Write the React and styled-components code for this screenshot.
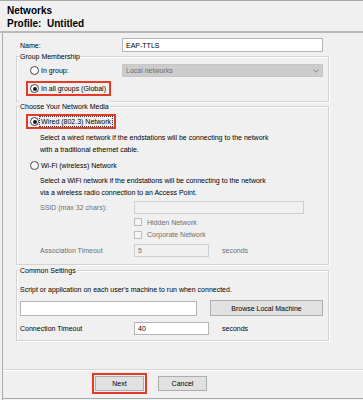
import React from "react";
import styled, { createGlobalStyle } from "styled-components";

const Global = createGlobalStyle`
  html, body { margin: 0; padding: 0; background: #f0f0f0; }
  body { font-family: "Liberation Sans", Arial, sans-serif; font-size: 7px; color: #000; }
  * { box-sizing: border-box; }
`;

const Window = styled.div`
  width: 363px;
  height: 400px;
  background: #f0f0f0;
  border-top: 1px solid #a8a8a8;
  display: flex;
  flex-direction: column;
  overflow: hidden;
`;

const Header = styled.div`
  height: 32px;
  padding: 3px 7px 0;
  border-bottom: 2px solid #b9b9b9;
  display: flex;
  flex-direction: column;
`;

const HeaderLine = styled.div`
  font-size: 10px;
  font-weight: bold;
  line-height: 13px;
  white-space: pre;
`;

const Body = styled.div`
  flex: 1;
  margin-left: 2px;
  border-left: 1px solid #a9a9a9;
  display: flex;
  flex-direction: column;
`;

const Content = styled.div`
  height: 337px;
  border-bottom: 1px solid #d6d6d6;
  box-shadow: 0 1px 0 #fff;
  padding: 5px 34px 0 13px;
  display: flex;
  flex-direction: column;
`;

const Row = styled.div`
  display: flex;
  align-items: center;
  padding-left: ${(p) => p.$indent || 0}px;
  margin-top: ${(p) => p.$mt || 0}px;
  height: ${(p) => (p.$h ? p.$h + "px" : "auto")};
`;

const Cell = styled.div`
  width: ${(p) => p.$w}px;
  flex: none;
  display: flex;
  align-items: center;
`;

const Label = styled.span`
  width: ${(p) => (p.$w ? p.$w + "px" : "auto")};
  flex: none;
  color: ${(p) => (p.$disabled ? "#6f6f6f" : "#000")};
  white-space: nowrap;
  line-height: 11px;
`;

const TextBox = styled.div`
  width: ${(p) => p.$w}px;
  height: ${(p) => p.$h || 13}px;
  flex: none;
  background: ${(p) => (p.$disabled ? "#f0f0f0" : "#fff")};
  border: 1px solid ${(p) => (p.$disabled ? "#cfcfcf" : "#b5b5b5")};
  padding: 0 3px;
  display: flex;
  align-items: center;
  color: ${(p) => (p.$disabled ? "#6f6f6f" : "#000")};
  line-height: 11px;
`;

const Select = styled.div`
  width: 201px;
  height: 13px;
  flex: none;
  background: #cccccc;
  border: 1px solid #c6c6c6;
  padding: 0 3px;
  display: flex;
  align-items: center;
  justify-content: space-between;
  color: #6d6d6d;
`;

const Group = styled.div`
  position: relative;
  margin-top: ${(p) => p.$mt}px;
  height: ${(p) => p.$h}px;
  border: 1px solid #d3d3d3;
  box-shadow: inset 1px 1px 0 #fff, 1px 1px 0 #fff;
  padding: ${(p) => p.$pt}px 4px 0 ${(p) => (p.$pl ?? 9)}px;
  display: flex;
  flex-direction: column;
`;

const Legend = styled.span`
  position: absolute;
  left: 2px;
  top: -6px;
  padding: 0 1px;
  background: #f0f0f0;
  line-height: 11px;
  color: #000;
`;

const RadioWrap = styled.div`
  display: inline-flex;
  align-items: center;
  gap: 1px;
  height: 15px;
  padding: 0 2px;
  border: 2px solid ${(p) => (p.$hl ? "#e23b27" : "transparent")};
  flex: none;
`;

const RadioCircle = styled.span`
  width: 9px;
  height: 9px;
  border-radius: 50%;
  border: 1px solid #444;
  background: #fff;
  display: flex;
  align-items: center;
  justify-content: center;
  flex: none;
  &::after {
    content: "";
    width: 4px;
    height: 4px;
    border-radius: 50%;
    background: ${(p) => (p.$on ? "#1a1a1a" : "transparent")};
  }
`;

const RadioText = styled.span`
  line-height: 9px;
  padding: 0 1px;
  outline: ${(p) => (p.$focus ? "1px dotted #333" : "none")};
  white-space: nowrap;
`;

const Desc = styled.div`
  padding-left: 14px;
  line-height: 12px;
  margin-top: ${(p) => p.$mt || 0}px;
  white-space: nowrap;
`;

const CheckBox = styled.span`
  width: 8px;
  height: 8px;
  border: 1px solid #bcbcbc;
  background: #f4f4f4;
  flex: none;
  margin-right: 5px;
`;

const Spacer = styled.div`
  width: ${(p) => p.$w}px;
  flex: none;
`;

const Button = styled.div`
  width: ${(p) => p.$w}px;
  height: ${(p) => p.$h || 15}px;
  flex: none;
  background: #e1e1e1;
  border: 1px solid #adadad;
  display: flex;
  align-items: center;
  justify-content: center;
  line-height: 11px;
  color: #000;
`;

const Footer = styled.div`
  flex: 1;
  display: flex;
  align-items: flex-start;
  padding: 3px 0 0 89px;
  gap: 8px;
  border-bottom: 1px solid #a9a9a9;
  margin-bottom: 1px;
`;

const HighlightBox = styled.div`
  padding: 1px;
  border: 2px solid ${(p) => (p.$hl ? "#e23b27" : "transparent")};
`;

function Radio({ on, hl, focus, children }) {
  return (
    <RadioWrap $hl={hl}>
      <RadioCircle $on={on} />
      <RadioText $focus={focus}>{children}</RadioText>
    </RadioWrap>
  );
}

function Chevron() {
  return (
    <svg width="6" height="4" viewBox="0 0 6 4">
      <path d="M0.5 0.8 L3 3.2 L5.5 0.8" fill="none" stroke="#8a8a8a" strokeWidth="1" />
    </svg>
  );
}

export default function App() {
  return (
    <>
      <Global />
      <Window>
        <Header>
          <HeaderLine>Networks</HeaderLine>
          <HeaderLine>Profile:  Untitled</HeaderLine>
        </Header>
        <Body>
          <Content>
            <Row $indent={4} $h={14}>
              <Label $w={102}>Name:</Label>
              <TextBox $w={201} $h={14}>EAP-TTLS</TextBox>
            </Row>

            <Group $mt={4} $h={46} $pt={6}>
              <Legend>Group Membership</Legend>
              <Row>
                <Cell $w={96}>
                  <Radio>In group:</Radio>
                </Cell>
                <Select>
                  <span>Local networks</span>
                  <Chevron />
                </Select>
              </Row>
              <Row $mt={3}>
                <Radio on hl>In all groups (Global)</Radio>
              </Row>
            </Group>

            <Group $mt={4} $h={159} $pt={7}>
              <Legend>Choose Your Network Media</Legend>
              <Row>
                <Radio on hl focus>Wired (802.3) Network</Radio>
              </Row>
              <Desc $mt={3}>
                Select a wired network if the endstations will be connecting to the network
                <br />
                with a traditional ethernet cable.
              </Desc>
              <Row $mt={2}>
                <Radio>Wi-Fi (wireless) Network</Radio>
              </Row>
              <Desc $mt={2}>
                Select a WiFi network if the endstations will be connecting to the network
                <br />
                via a wireless radio connection to an Access Point.
              </Desc>
              <Row $mt={2} $indent={14}>
                <Label $w={94} $disabled>SSID (max 32 chars):</Label>
                <TextBox $w={170} $disabled />
              </Row>
              <Row $mt={2} $h={12} $indent={108}>
                <CheckBox />
                <Label $disabled>Hidden Network</Label>
              </Row>
              <Row $h={13} $indent={108}>
                <CheckBox />
                <Label $disabled>Corporate Network</Label>
              </Row>
              <Row $mt={3} $indent={14}>
                <Label $w={94} $disabled>Association Timeout</Label>
                <TextBox $w={75} $disabled>5</TextBox>
                <Spacer $w={13} />
                <Label $disabled>seconds</Label>
              </Row>
            </Group>

            <Group $mt={5} $h={71} $pt={12} $pl={3}>
              <Legend>Common Settings</Legend>
              <Row $h={12}>
                <Label>Script or application on each user's machine to run when connected.</Label>
              </Row>
              <Row $mt={5}>
                <TextBox $w={177} $h={15} />
                <Spacer $w={13} />
                <Button $w={113} $h={16}>Browse Local Machine</Button>
              </Row>
              <Row $mt={6}>
                <Label $w={114}>Connection Timeout</Label>
                <TextBox $w={75}>40</TextBox>
                <Spacer $w={13} />
                <Label>seconds</Label>
              </Row>
            </Group>
          </Content>
          <Footer>
            <HighlightBox $hl>
              <Button $w={49}>Next</Button>
            </HighlightBox>
            <HighlightBox>
              <Button $w={49}>Cancel</Button>
            </HighlightBox>
          </Footer>
        </Body>
      </Window>
    </>
  );
}
